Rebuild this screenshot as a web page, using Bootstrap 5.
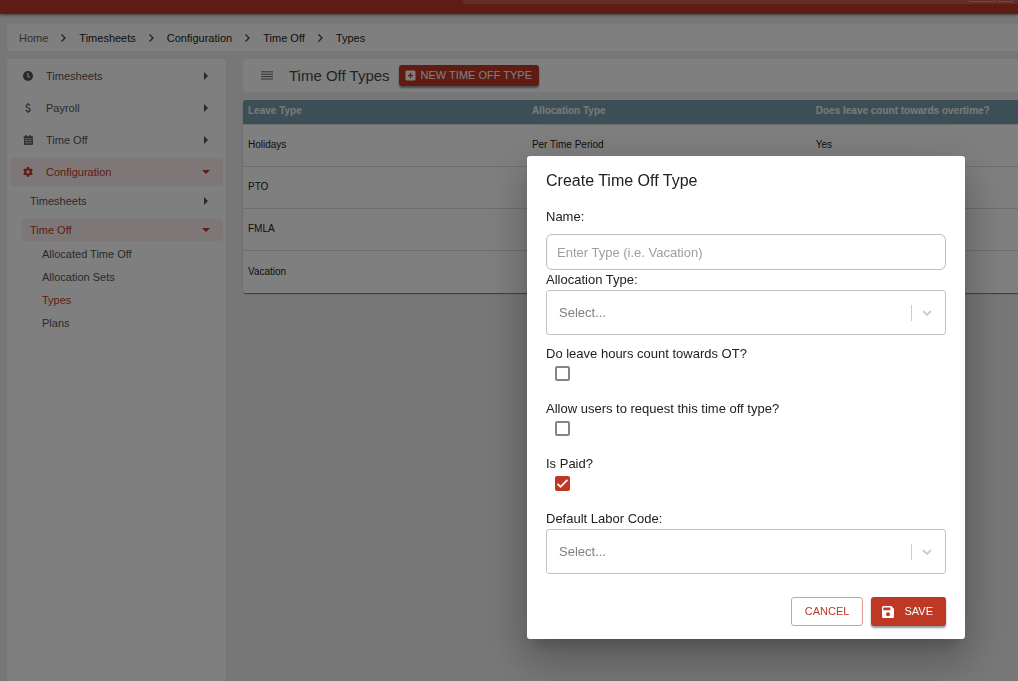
<!DOCTYPE html>
<html lang="en">
<head>
<meta charset="utf-8">
<meta name="viewport" content="width=device-width, initial-scale=1">
<title>Time Off Types</title>
<link href="https://cdn.jsdelivr.net/npm/bootstrap@5.3.0/dist/css/bootstrap.min.css" rel="stylesheet">
<style>
:root { --brand: #bf3826; }
body { font-family: "Liberation Sans", Arial, sans-serif; font-size: 13px; line-height: 20px; color: #212121; background: #eee; }
svg { display: block; flex: none; fill: currentColor; }
.app { min-height: 100vh; }
.topbar { height: 14px; background: var(--brand); box-shadow: 0 1px 3px rgba(0,0,0,.5); padding-left: 462px; }
.topsearch { height: 4px; background: #c75c4e; border-bottom-left-radius: 4px; padding-right: 5px; gap: 2px; }
.keycap { height: 2px; width: 27px; border: 1px solid #d79b92; border-top: 0; border-radius: 0 0 3px 3px; }
.keycap-sm { width: 15px; }
.panel { background: #fff; border-radius: 3px; }
.crumbs { margin: 10px 0 8px 7px; padding-left: 12px; height: 27px; font-size: 11px; gap: 12px; border-radius: 3px 0 0 3px; }
.crumbs a { color: #212121; }
.crumbs a.home { color: #616161; }
.workspace { padding-left: 7px; gap: 17px; }
.side { width: 219px; padding: 3px 3px 0; font-size: 11px; }
.side a { color: #555; border-radius: 3px; height: 28px; margin-bottom: 4px; padding: 0 15px 0 12px; }
.side a svg.glyph { width: 12px; height: 12px; margin-right: 12px; }
.side a.active { color: var(--brand); background: #fbf0ee; }
.side a.open { padding-right: 13px; }
.side .sub a { height: 22px; margin: 0 0 7px 12px; padding-left: 8px; }
.side .leaf a { height: 23px; margin: 0 0 0 12px; padding-left: 20px; }
.side .leaf { margin-top: -6px; }
.side .leaf a.current { color: var(--brand); }
.toolbar { height: 33px; padding-left: 18px; border-radius: 3px 0 0 3px; margin-bottom: 8px; }
.toolbar h1 { font-size: 15px; line-height: 20px; font-weight: 400; color: #484848; margin: 0 9px 0 16px; }
.btn { --bs-btn-font-size: 11px; --bs-btn-line-height: 15px; --bs-btn-border-radius: 3px; }
.btn-brand { background: var(--brand); color: #fff; box-shadow: 0 2px 2px rgba(0,0,0,.4); }
.btn-brand:hover { background: #a52f1f; color: #fff; }
.btn-line { border-color: #df9b92; color: var(--brand); }
.btn-new { height: 21px; padding: 0 7px 0 6px; border: 0; gap: 5px; }
.types { border-radius: 3px 0 0 3px; box-shadow: 0 1px 1px rgba(0,0,0,.5); overflow: hidden; }
.types table { table-layout: fixed; font-size: 10px; line-height: 14px; margin: 0; }
.types th { background: #7b9eac; color: #f4f4f4; height: 24px; padding: 0 5px 1px; vertical-align: middle; border-bottom: 1px solid #ddd; width: 27%; }
.types th.wide { width: 37%; }
.types td { height: 42px; padding: 0 5px; color: #212121; border-bottom: 1px solid #dcdcdc; background: #fff; }
.types tr:last-child td { height: 43px; border-bottom: 0; }
.modal { background: rgba(0,0,0,.5); padding: 156px 53px 0 0; }
.modal-dialog { width: 438px; max-width: 100%; margin: 0 0 0 auto; }
.modal-content { border: 0; border-radius: 3px; padding: 13px 19px; color: #212121;
  box-shadow: 0 11px 15px -7px rgba(0,0,0,.2), 0 24px 38px 3px rgba(0,0,0,.14), 0 9px 46px 8px rgba(0,0,0,.12); }
.modal-title { font-size: 16px; line-height: 24px; font-weight: 400; margin-bottom: 14px; }
.modal label { display: block; line-height: 20px; }
.modal .form-control { height: 36px; margin-top: 7px; padding: 0 10px; font-size: 13px; border: 1px solid #bdbdbd; border-radius: 6px; }
.modal .form-control::placeholder { color: #9e9e9e; }
.modal .form-select { height: 45px; padding: 0 40px 0 12px; font-size: 13px; color: #808080; border: 1px solid #c4c4c4; border-radius: 3px;
  background: #fff url("data:image/svg+xml,%3Csvg xmlns='http://www.w3.org/2000/svg' width='34' height='16' fill='none' stroke='%23ccc'%3E%3Cpath d='M.5 0v16'/%3E%3Cpath d='M12 6l4 4 4-4' stroke-width='1.9'/%3E%3C/svg%3E") no-repeat right 0 center / 34px 16px; }
.checks { margin-top: 9px; }
.checks .item { height: 55px; }
.modal .form-check-input { display: block; width: 15px; height: 15px; margin: 2px 0 0 9px; border: 2px solid #858585; border-radius: 2px; }
.modal .form-check-input:checked { background-color: var(--brand); border-color: var(--brand);
  background-image: url("data:image/svg+xml,%3Csvg xmlns='http://www.w3.org/2000/svg' viewBox='0 0 11 11' fill='none' stroke='%23fff' stroke-width='1.8'%3E%3Cpath d='M.5 5.8l3 3 7-7'/%3E%3C/svg%3E"); }
.actions { margin-top: 23px; gap: 8px; }
.actions .btn { height: 29px; padding: 0 13px; }
.actions .btn-save { padding: 0 13px 0 10px; gap: 9px; border: 0; }
</style>
</head>
<body>
<div class="app d-flex flex-column">
  <header class="topbar">
    <div class="topsearch d-flex justify-content-end"><span class="keycap"></span><span class="keycap keycap-sm"></span></div>
  </header>
  <nav class="crumbs panel d-flex align-items-center" aria-label="Breadcrumb">
    <a class="home text-decoration-none" href="#">Home</a>
    <svg width="7" height="10" viewBox="0 0 7 10"><path d="M1.500 1.500L5 5 1.500 8.500" fill="none" stroke="#424242" stroke-width="1.300"/></svg>
    <a class="text-decoration-none" href="#">Timesheets</a>
    <svg width="7" height="10" viewBox="0 0 7 10"><path d="M1.500 1.500L5 5 1.500 8.500" fill="none" stroke="#424242" stroke-width="1.300"/></svg>
    <a class="text-decoration-none" href="#">Configuration</a>
    <svg width="7" height="10" viewBox="0 0 7 10"><path d="M1.500 1.500L5 5 1.500 8.500" fill="none" stroke="#424242" stroke-width="1.300"/></svg>
    <a class="text-decoration-none" href="#">Time Off</a>
    <svg width="7" height="10" viewBox="0 0 7 10"><path d="M1.500 1.500L5 5 1.500 8.500" fill="none" stroke="#424242" stroke-width="1.300"/></svg>
    <a class="text-decoration-none" href="#">Types</a>
  </nav>
  <div class="workspace d-flex flex-grow-1">
    <nav class="side panel flex-shrink-0" aria-label="Sections">
      <a class="d-flex align-items-center text-decoration-none" href="#"><svg class="glyph" viewBox="0 0 12 12"><circle cx="6" cy="6" r="5"/><path d="M5.800 3v3.100l2 1.400" fill="none" stroke="#fff" stroke-width="1.100"/></svg><span class="flex-grow-1">Timesheets</span><svg width="4" height="8" viewBox="0 0 4 8"><path d="M0 0l4 4-4 4z"/></svg></a>
      <a class="d-flex align-items-center text-decoration-none" href="#"><svg class="glyph" viewBox="0 0 12 12"><path d="M8.100 3.600C7.700 2.800 7 2.500 6 2.500c-1.200 0-2 .6-2 1.500C4 6.200 8.200 5.200 8.200 7.700c0 1-.9 1.700-2.200 1.700-1.200 0-2-.5-2.300-1.400M6 1v1.500M6 9.400V11" fill="none" stroke="currentColor" stroke-width="1.200"/></svg><span class="flex-grow-1">Payroll</span><svg width="4" height="8" viewBox="0 0 4 8"><path d="M0 0l4 4-4 4z"/></svg></a>
      <a class="d-flex align-items-center text-decoration-none" href="#"><svg class="glyph" viewBox="0 0 12 12"><path d="M3.300 1h1.200v1.300h3V1h1.200v1.300H10q1 0 1 .9V4H1.500v-.8q0-.9 1-.9h.8zM2 4.500h9V10q0 1-1 1H3q-1 0-1-1z"/><path d="M2.500 6.500h8M2.500 8.700h8M4.800 5v6M7.900 5v6" stroke="#fff" stroke-width=".5"/></svg><span class="flex-grow-1">Time Off</span><svg width="4" height="8" viewBox="0 0 4 8"><path d="M0 0l4 4-4 4z"/></svg></a>
      <a class="active open d-flex align-items-center text-decoration-none" href="#"><svg class="glyph" viewBox="0 0 12 12"><path fill-rule="evenodd" d="M4.900 1h2.200l.3 1.400.9.500 1.400-.5 1.100 1.900-1.100 1v1.100l1.100 1-1.100 1.900-1.400-.5-.9.500-.3 1.400H4.900l-.3-1.400-.9-.5-1.400.5-1.100-1.900 1.100-1V5.300l-1.100-1 1.100-1.900 1.400.5.900-.5zM6 4.300a1.600 1.600 0 100 3.200 1.600 1.600 0 000-3.200z"/></svg><span class="flex-grow-1">Configuration</span><svg width="8" height="4" viewBox="0 0 8 4"><path d="M0 0h8L4 4z"/></svg></a>
      <div class="sub">
        <a class="d-flex align-items-center text-decoration-none" href="#"><span class="flex-grow-1">Timesheets</span><svg width="4" height="8" viewBox="0 0 4 8"><path d="M0 0l4 4-4 4z"/></svg></a>
        <a class="active open d-flex align-items-center text-decoration-none" href="#"><span class="flex-grow-1">Time Off</span><svg width="8" height="4" viewBox="0 0 8 4"><path d="M0 0h8L4 4z"/></svg></a>
      </div>
      <div class="leaf">
        <a class="d-flex align-items-center text-decoration-none" href="#">Allocated Time Off</a>
        <a class="d-flex align-items-center text-decoration-none" href="#">Allocation Sets</a>
        <a class="current d-flex align-items-center text-decoration-none" href="#" aria-current="page">Types</a>
        <a class="d-flex align-items-center text-decoration-none" href="#">Plans</a>
      </div>
    </nav>
    <main class="flex-grow-1">
      <div class="toolbar panel d-flex align-items-center">
        <svg width="12" height="9" viewBox="0 0 12 9"><path d="M0 .8h12M0 3.200h12M0 5.600h12M0 8h12" stroke="#555" stroke-width=".9"/></svg>
        <h1>Time Off Types</h1>
        <button type="button" class="btn btn-brand btn-new d-flex align-items-center"><svg width="11" height="11" viewBox="0 0 11 11"><rect x=".5" y=".5" width="10" height="10" rx="1.500"/><path d="M5.500 2.800v5.400M2.800 5.500h5.400" stroke="#bf3826" stroke-width="1.300"/></svg>NEW TIME OFF TYPE</button>
      </div>
      <div class="types">
        <table class="table align-middle">
          <thead><tr><th class="wide" scope="col">Leave Type</th><th class="wide" scope="col">Allocation Type</th><th scope="col">Does leave count towards overtime?</th></tr></thead>
          <tbody>
            <tr><td>Holidays</td><td>Per Time Period</td><td>Yes</td></tr>
            <tr><td>PTO</td><td></td><td></td></tr>
            <tr><td>FMLA</td><td></td><td></td></tr>
            <tr><td>Vacation</td><td></td><td></td></tr>
          </tbody>
        </table>
      </div>
    </main>
  </div>
</div>

<div class="modal d-block" role="dialog" aria-modal="true" aria-labelledby="dialogTitle">
  <div class="modal-dialog">
    <form class="modal-content">
      <h2 class="modal-title" id="dialogTitle">Create Time Off Type</h2>
      <label for="typeName">Name:</label>
      <input class="form-control" id="typeName" type="text" placeholder="Enter Type (i.e. Vacation)">
      <label for="allocation">Allocation Type:</label>
      <select class="form-select" id="allocation"><option>Select...</option></select>
      <div class="checks">
        <div class="item"><label for="countOt">Do leave hours count towards OT?</label><input class="form-check-input" id="countOt" type="checkbox"></div>
        <div class="item"><label for="allowRequest">Allow users to request this time off type?</label><input class="form-check-input" id="allowRequest" type="checkbox"></div>
        <div class="item"><label for="isPaid">Is Paid?</label><input class="form-check-input" id="isPaid" type="checkbox" checked></div>
      </div>
      <label for="labor">Default Labor Code:</label>
      <select class="form-select" id="labor"><option>Select...</option></select>
      <div class="actions d-flex justify-content-end">
        <button type="button" class="btn btn-line">CANCEL</button>
        <button type="button" class="btn btn-brand btn-save d-flex align-items-center"><svg width="14" height="14" viewBox="0 0 14 14"><path fill-rule="evenodd" d="M2.500 1h7.800L13 3.700v7.800q0 1.500-1.500 1.500h-9Q1 13 1 11.500v-9Q1 1 2.500 1zM2.400 2.400v2.900h7V2.400zM7 7.200a2 2 0 100 4 2 2 0 000-4z"/></svg>SAVE</button>
      </div>
    </form>
  </div>
</div>
<script src="https://cdn.jsdelivr.net/npm/bootstrap@5.3.0/dist/js/bootstrap.bundle.min.js"></script>
</body>
</html>
